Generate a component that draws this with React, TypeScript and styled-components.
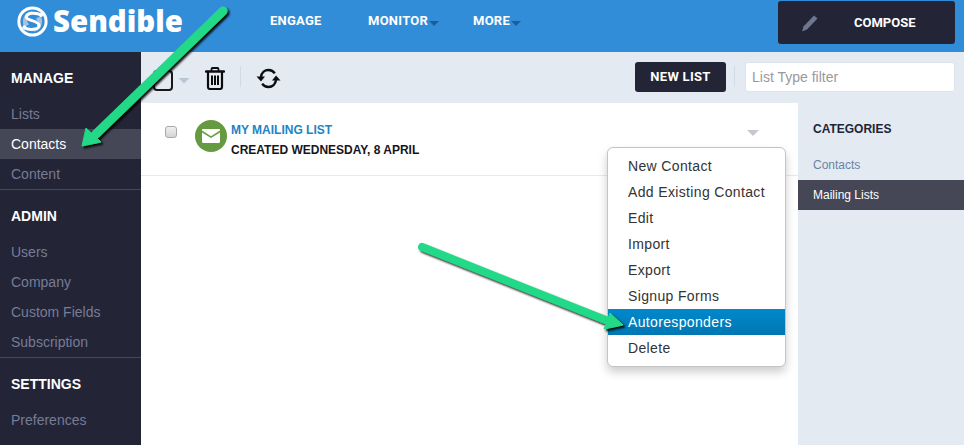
import React from "react";
import styled, { createGlobalStyle } from "styled-components";

const Global = createGlobalStyle`
  html, body { margin: 0; padding: 0; background: #fff; overflow: hidden; }
  body { font-family: "Liberation Sans", Arial, sans-serif; }
  * { box-sizing: border-box; }
`;

const condensed = `"Roboto", sans-serif`;

const Page = styled.div`
  position: relative;
  width: 964px;
  height: 445px;
  overflow: hidden;
  display: flex;
  flex-direction: column;
`;

const Header = styled.header`
  height: 52px;
  flex: none;
  background: #318dd8;
  display: flex;
  align-items: flex-start;
`;

const Brand = styled.div`
  width: 270px;
  flex: none;
  display: flex;
  align-items: center;
  gap: 5px;
  padding: 3px 0 0 17px;
`;

const BrandName = styled.span`
  font-family: "Open Sans", sans-serif;
  font-weight: 800;
  font-size: 29.4px;
  line-height: 36px;
  color: #fff;
`;

const Nav = styled.nav`
  display: flex;
  flex: 1;
  padding-top: 13px;
`;

const NavItem = styled.span<{ $width: number }>`
  width: ${(p) => p.$width}px;
  flex: none;
  display: flex;
  align-items: center;
  font-family: ${condensed};
  font-weight: 700;
  font-size: 13px;
  line-height: 16px;
  letter-spacing: 0.25px;
  color: #fff;
`;

const NavCaret = styled.i`
  width: 10px;
  height: 5px;
  flex: none;
  margin: 5px 0 0 1px;
  background: #1d5ba3;
  clip-path: polygon(0 0, 100% 0, 50% 100%);
`;

const Compose = styled.button`
  width: 177px;
  height: 43px;
  flex: none;
  margin: 1px 9px 0 0;
  border: 0;
  border-radius: 3px;
  background: #232436;
  color: #fff;
  display: flex;
  align-items: center;
  padding: 0 0 0 23px;
  font-family: ${condensed};
  font-weight: 700;
  font-size: 13px;
  letter-spacing: 0;
`;

const ComposeLabel = styled.span`
  margin-left: 35px;
`;

const Body = styled.div`
  flex: 1;
  display: flex;
  min-height: 0;
`;

const Sidebar = styled.aside`
  width: 141px;
  flex: none;
  background: #232436;
`;

const SideSection = styled.section<{ $divider?: boolean }>`
  padding-top: 18px;
  border-top: ${(p) => (p.$divider ? "1px solid #45485a" : "0")};
`;

const SideTitle = styled.h3<{ $gap: number }>`
  margin: 0 0 ${(p) => p.$gap}px;
  padding-left: 11px;
  font-size: 14px;
  line-height: 16px;
  font-weight: 700;
  color: #fff;
`;

const SideLink = styled.a<{ $active?: boolean }>`
  display: block;
  height: 30px;
  padding-left: 11px;
  font-size: 14px;
  line-height: 30px;
  color: ${(p) => (p.$active ? "#fff" : "#767c96")};
  background: ${(p) => (p.$active ? "#454757" : "transparent")};
`;

const Main = styled.main`
  flex: 1;
  display: flex;
  flex-direction: column;
  min-width: 0;
`;

const Toolbar = styled.div`
  height: 51px;
  flex: none;
  background: #e3eaf2;
  display: flex;
  align-items: center;
  padding: 0 9px 2px 12px;
`;

const CheckAll = styled.span`
  width: 20px;
  height: 21px;
  margin-top: 8px;
  border: 2px solid #16161c;
  border-radius: 4px;
  flex: none;
`;

const CheckCaret = styled.i`
  width: 12px;
  height: 6px;
  flex: none;
  margin: 8px 0 0 5px;
  background: #b9c6d6;
  clip-path: polygon(0 0, 100% 0, 50% 100%);
`;

const IconSlot = styled.span<{ $left: number }>`
  display: flex;
  flex: none;
  margin: 4px 0 0 ${(p) => p.$left}px;
`;

const Rule = styled.span`
  width: 1px;
  height: 21px;
  background: #d2dae4;
  flex: none;
  margin: 0 15px 0 15px;
`;

const Spacer = styled.span`
  flex: 1;
`;

const NewList = styled.button`
  width: 91px;
  height: 30px;
  border: 0;
  border-radius: 3px;
  background: #232436;
  color: #fff;
  font-family: ${condensed};
  font-weight: 700;
  font-size: 13px;
  letter-spacing: 0.3px;
  flex: none;
`;

const RuleTight = styled(Rule)`
  margin: 0 10px 0 8px;
`;

const Filter = styled.input`
  width: 210px;
  height: 30px;
  flex: none;
  border: 1px solid #dde3ea;
  border-radius: 3px;
  background: #fff;
  padding: 0 6px;
  font-family: "Liberation Sans", sans-serif;
  font-size: 14px;
  &::placeholder { color: #9a9a9a; opacity: 1; }
`;

const Columns = styled.div`
  flex: 1;
  display: flex;
  min-height: 0;
`;

const ListArea = styled.div`
  width: 657px;
  flex: none;
  position: relative;
  background: #fff;
`;

const ListRow = styled.div`
  height: 73px;
  border-bottom: 1px solid #e5eaf0;
  display: flex;
  padding: 17px 0 0 24px;
`;

const RowCheck = styled.span`
  width: 12px;
  height: 12px;
  margin-top: 6px;
  border: 1px solid #a9a9a9;
  border-radius: 3px;
  background: linear-gradient(#efefef, #d4d4d4);
  flex: none;
`;

const Avatar = styled.span`
  width: 32px;
  height: 32px;
  margin-left: 18px;
  border-radius: 50%;
  background: #669a41;
  display: flex;
  align-items: center;
  justify-content: center;
  flex: none;
`;

const RowText = styled.div`
  margin-left: 4px;
  font-size: 12px;
  line-height: 16px;
  font-weight: 700;
  padding-top: 2px;
`;

const RowName = styled.div`
  color: #1c84c6;
  margin-bottom: 4px;
`;

const RowDate = styled.div`
  color: #16161c;
`;

const RowCaret = styled.i`
  position: absolute;
  left: 606px;
  top: 27px;
  width: 12px;
  height: 6px;
  background: #c3c8cf;
  clip-path: polygon(0 0, 100% 0, 50% 100%);
`;

const Menu = styled.ul`
  position: absolute;
  left: 466px;
  top: 44px;
  width: 179px;
  height: 220px;
  margin: 0;
  padding: 5px 0 0;
  list-style: none;
  background: #fff;
  border: 1px solid #c4c4c4;
  border-radius: 6px;
  box-shadow: 0 5px 10px rgba(0, 0, 0, 0.2);
`;

const MenuItem = styled.li<{ $active?: boolean }>`
  height: 26px;
  padding-left: 20px;
  font-size: 14px;
  line-height: 26px;
  letter-spacing: 0.35px;
  color: ${(p) => (p.$active ? "#fff" : "#333")};
  background: ${(p) => (p.$active ? "linear-gradient(#0088cc, #0077b3)" : "transparent")};
`;

const Categories = styled.aside`
  flex: 1;
  background: #e3eaf2;
  padding-top: 18px;
`;

const CatTitle = styled.h4`
  margin: 0 0 13px;
  padding-left: 15px;
  font-size: 12px;
  line-height: 16px;
  font-weight: 700;
  color: #232436;
`;

const CatLink = styled.a<{ $active?: boolean }>`
  display: block;
  height: 30px;
  padding-left: 15px;
  font-size: 12px;
  line-height: 30px;
  color: ${(p) => (p.$active ? "#fff" : "#6b84a3")};
  background: ${(p) => (p.$active ? "#454757" : "transparent")};
`;

const ArrowLayer = styled.svg`
  position: absolute;
  left: 0;
  top: 0;
  pointer-events: none;
`;

const Logo = () => (
  <svg width="31" height="31" viewBox="0 0 33 33" fill="none">
    <circle cx="16.5" cy="16.5" r="14.5" fill="#318dd8" stroke="#fff" strokeWidth="3.2" />
    <path d="M7 21C4.5 13 9 6 16 5.5C10 10 9.5 17 13 19.5C11 21 9 21.5 7 21Z" fill="#a9c0de" />
    <path d="M26 12C28.5 20 24 27 17 27.5C23 23 23.5 16 20 13.5C22 12 24 11.5 26 12Z" fill="#a9c0de" />
    <path d="M25.5 9.5C20 6.5 10.5 7 10 11.5C9.6 16 23 15 23.5 20.5C24 25.5 13 26 7.5 23" stroke="#fff" strokeWidth="3.2" strokeLinecap="round" />
    <circle cx="8" cy="22.8" r="2.2" fill="#fff" />
    <circle cx="25.5" cy="9.5" r="2.2" fill="#fff" />
  </svg>
);

const Pencil = () => (
  <svg width="18" height="18" viewBox="0 0 18 18">
    <path d="M13 1.5L16.5 4.6L6 15.5L1 17.5L2.7 12.2Z" fill="#6f7690" />
  </svg>
);

const Trash = () => (
  <svg width="20" height="23" viewBox="0 0 20 23" fill="none" stroke="#0c0c10">
    <path d="M1 4.5H19" strokeWidth="2.4" strokeLinecap="round" />
    <path d="M6.5 4V2.2C6.5 1.5 7 1 7.7 1H12.3C13 1 13.5 1.5 13.5 2.2V4" strokeWidth="1.8" />
    <path d="M3 5V20C3 21.2 3.8 22 5 22H15C16.2 22 17 21.2 17 20V5" strokeWidth="2.2" />
    <path d="M7 8.5V18M10 8.5V18M13 8.5V18" strokeWidth="2" />
  </svg>
);

const Sync = () => (
  <svg width="25" height="21" viewBox="0 0 25 21" fill="none">
    <path d="M5 9C5.5 4.8 8.6 2 12.5 2C15.2 2 17.4 3.2 18.8 5.4" stroke="#0c0c10" strokeWidth="2.4" />
    <path d="M20 12C19.5 16.2 16.4 19 12.5 19C9.8 19 7.6 17.8 6.2 15.6" stroke="#0c0c10" strokeWidth="2.4" />
    <path d="M0.5 8.5H9L5 13.5Z" fill="#0c0c10" />
    <path d="M24.5 12.5H16L20 7.5Z" fill="#0c0c10" />
  </svg>
);

const Mail = () => (
  <svg width="18" height="14" viewBox="0 0 18 14">
    <path d="M0 1.2C0 .5.5 0 1.2 0H16.8C17.5 0 18 .5 18 1.2V1.6L9 7.2L0 1.6Z" fill="#fff" />
    <path d="M0 3.4L9 9L18 3.4V12.8C18 13.5 17.5 14 16.8 14H1.2C.5 14 0 13.5 0 12.8Z" fill="#fff" />
  </svg>
);

const Arrows = () => (
  <ArrowLayer width="964" height="445" viewBox="0 0 964 445" fill="none">
    <defs>
      <filter id="arrowShadow" x="-20%" y="-20%" width="140%" height="140%">
        <feDropShadow dx="2" dy="2" stdDeviation="1.1" floodColor="#000" floodOpacity="0.95" />
      </filter>
    </defs>
    <g filter="url(#arrowShadow)">
      <path d="M223 11L96 134" stroke="#24d987" strokeWidth="9" strokeLinecap="round" />
      <path d="M82 146L86 128L101 142Z" fill="#24d987" stroke="#24d987" strokeWidth="1" strokeLinejoin="round" />
    </g>
    <g filter="url(#arrowShadow)">
      <path d="M422 247L608 321" stroke="#24d987" strokeWidth="8" strokeLinecap="round" />
      <path d="M623 325L604 329L610 313Z" fill="#24d987" stroke="#24d987" strokeWidth="1" strokeLinejoin="round" />
    </g>
  </ArrowLayer>
);

const menuItems = ["New Contact", "Add Existing Contact", "Edit", "Import", "Export", "Signup Forms", "Autoresponders", "Delete"];

export default function App() {
  return (
    <Page>
      <Global />
      <Header>
        <Brand>
          <Logo />
          <BrandName>Sendible</BrandName>
        </Brand>
        <Nav>
          <NavItem $width={98}>ENGAGE</NavItem>
          <NavItem $width={105}>MONITOR<NavCaret /></NavItem>
          <NavItem $width={100}>MORE<NavCaret /></NavItem>
        </Nav>
        <Compose>
          <Pencil />
          <ComposeLabel>COMPOSE</ComposeLabel>
        </Compose>
      </Header>
      <Body>
        <Sidebar>
          <SideSection>
            <SideTitle $gap={13}>MANAGE</SideTitle>
            <SideLink>Lists</SideLink>
            <SideLink $active>Contacts</SideLink>
            <SideLink>Content</SideLink>
          </SideSection>
          <SideSection $divider>
            <SideTitle $gap={13}>ADMIN</SideTitle>
            <SideLink>Users</SideLink>
            <SideLink>Company</SideLink>
            <SideLink>Custom Fields</SideLink>
            <SideLink>Subscription</SideLink>
          </SideSection>
          <SideSection $divider>
            <SideTitle $gap={13}>SETTINGS</SideTitle>
            <SideLink>Preferences</SideLink>
          </SideSection>
        </Sidebar>
        <Main>
          <Toolbar>
            <CheckAll />
            <CheckCaret />
            <IconSlot $left={15}><Trash /></IconSlot>
            <Rule />
            <IconSlot $left={0}><Sync /></IconSlot>
            <Spacer />
            <NewList>NEW LIST</NewList>
            <RuleTight />
            <Filter placeholder="List Type filter" />
          </Toolbar>
          <Columns>
            <ListArea>
              <ListRow>
                <RowCheck />
                <Avatar><Mail /></Avatar>
                <RowText>
                  <RowName>MY MAILING LIST</RowName>
                  <RowDate>CREATED WEDNESDAY, 8 APRIL</RowDate>
                </RowText>
              </ListRow>
              <RowCaret />
              <Menu>
                {menuItems.map((item) => (
                  <MenuItem key={item} $active={item === "Autoresponders"}>{item}</MenuItem>
                ))}
              </Menu>
            </ListArea>
            <Categories>
              <CatTitle>CATEGORIES</CatTitle>
              <CatLink>Contacts</CatLink>
              <CatLink $active>Mailing Lists</CatLink>
            </Categories>
          </Columns>
        </Main>
      </Body>
      <Arrows />
    </Page>
  );
}
